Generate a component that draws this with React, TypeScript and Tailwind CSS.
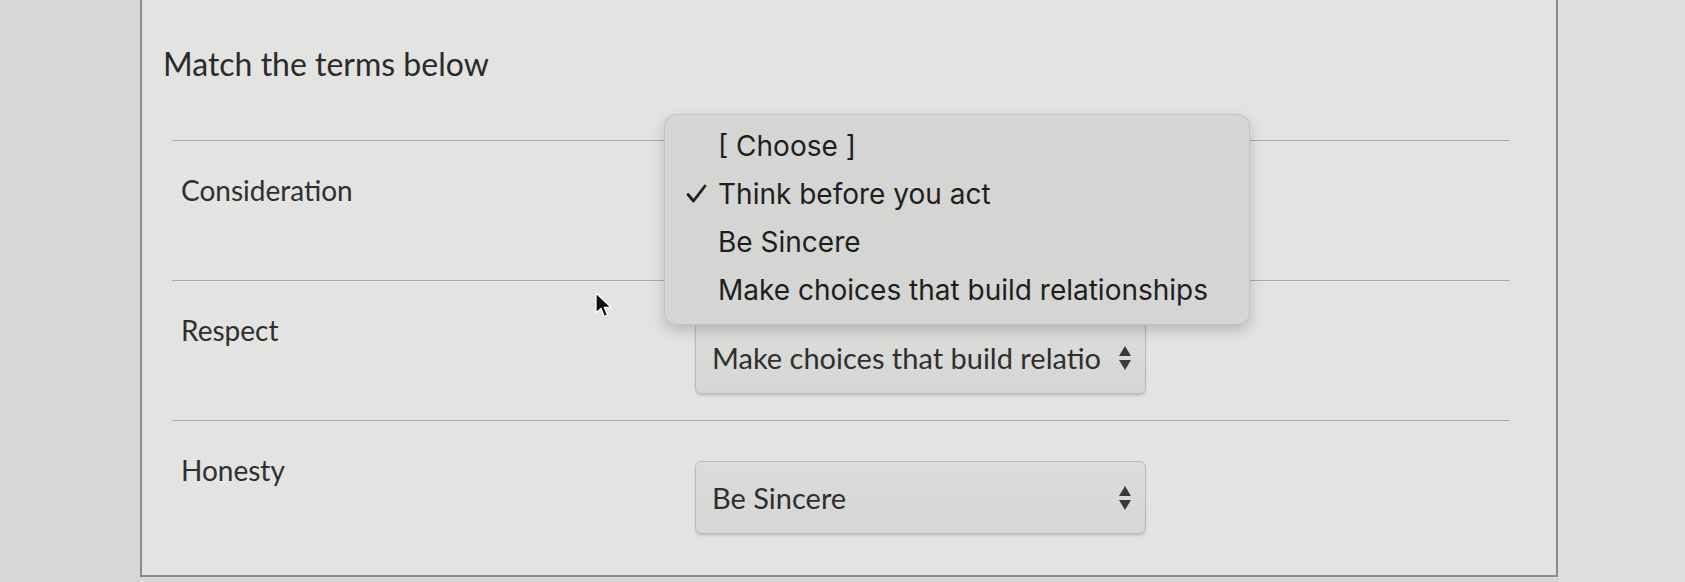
import React from "react"

const lato = { fontFamily: "Lato, 'Noto Sans', sans-serif" }
const sys = { fontFamily: "Inter, 'Liberation Sans', Arial, sans-serif" }

function Arrows() {
  return (
    <svg width="14" height="28" viewBox="0 0 14 28" className="shrink-0">
      <path d="M7 2 L13 12 L1 12 Z" fill="#3a3a3a" />
      <path d="M7 26 L13 16 L1 16 Z" fill="#3a3a3a" />
    </svg>
  )
}

function Select({ value }: { value: string }) {
  return (
    <div className="w-[451px] h-[73px] rounded-[6px] border border-[#b9b9b6] bg-gradient-to-b from-[#dcdcda] to-[#d6d6d4] shadow-[0_2px_2px_rgba(0,0,0,0.12)] flex items-center pl-[16px] pr-[13px] gap-[16px]">
      <span className="flex-1 overflow-hidden whitespace-nowrap text-[29px] text-[#2f2f2f]" style={lato}>
        {value}
      </span>
      <Arrows />
    </div>
  )
}

function Check() {
  return (
    <svg className="absolute left-[20px] top-[14px]" width="22" height="20" viewBox="0 0 22 20">
      <path d="M3 10.5 L8.5 17 L20 2" fill="none" stroke="#1e1e1e" strokeWidth="2.8" strokeLinecap="round" strokeLinejoin="round" />
    </svg>
  )
}

function Menu() {
  const items = ["[ Choose ]", "Think before you act", "Be Sincere", "Make choices that build relationships"]
  return (
    <div
      className="absolute left-[-31px] top-[-67px] w-[586px] h-[211px] rounded-[12px] bg-[#d5d5d3] border border-[#c2c2c0] shadow-[0_6px_14px_rgba(0,0,0,0.18)] pt-[7px] z-10"
      style={sys}
    >
      {items.map((it, i) => (
        <div key={it} className="relative h-[48px] flex items-center pl-[53px] text-[28px] text-[#1e1e1e]">
          {i === 1 && <Check />}
          {it}
        </div>
      ))}
    </div>
  )
}

function Row({ label, value, open }: { label: string; value: string; open?: boolean }) {
  return (
    <div className="flex h-[140px] border-t border-[#a9a9a7]">
      <div className="w-[523px] pl-[9px] pt-[28px] text-[28px] text-[#2f2f2f]" style={lato}>
        {label}
      </div>
      <div className="relative mt-[40px] h-[73px]">
        {open ? (
          <div className="w-[451px] h-[73px] rounded-[6px] border border-[#b9b9b6] bg-[#d9d9d7]" />
        ) : (
          <Select value={value} />
        )}
        {open && <Menu />}
      </div>
    </div>
  )
}

export default function App() {
  return (
    <div className="w-[1685px] h-[582px] overflow-hidden flex bg-[#d9d9d7]">
      <div className="w-[140px] shrink-0 bg-[#d8d8d6]" />
      <div className="relative w-[1418px] h-[577px] shrink-0 bg-[#e3e3e1] border-l-2 border-r-2 border-b-2 border-[#8c8c8a]">
        <div className="pl-[21px] pt-[40px] text-[32px] text-[#2a2a2a]" style={lato}>
          Match the terms below
        </div>
        <div className="ml-[30px] mt-[52px] w-[1338px]">
          <Row label="Consideration" value="Think before you act" open />
          <Row label="Respect" value="Make choices that build relationships" />
          <Row label="Honesty" value="Be Sincere" />
        </div>
        <svg className="absolute left-[452px] top-[292px]" width="20" height="28" viewBox="0 0 20 28">
          <path d="M2 1 L2 21 L7 16.5 L10.2 24.5 L13.5 23.2 L10.4 15.4 L17 15.4 Z" fill="#111" stroke="#fff" strokeWidth="1.3" strokeLinejoin="round" />
        </svg>
      </div>
      <div className="flex-1 bg-[#dededc]" />
    </div>
  )
}
